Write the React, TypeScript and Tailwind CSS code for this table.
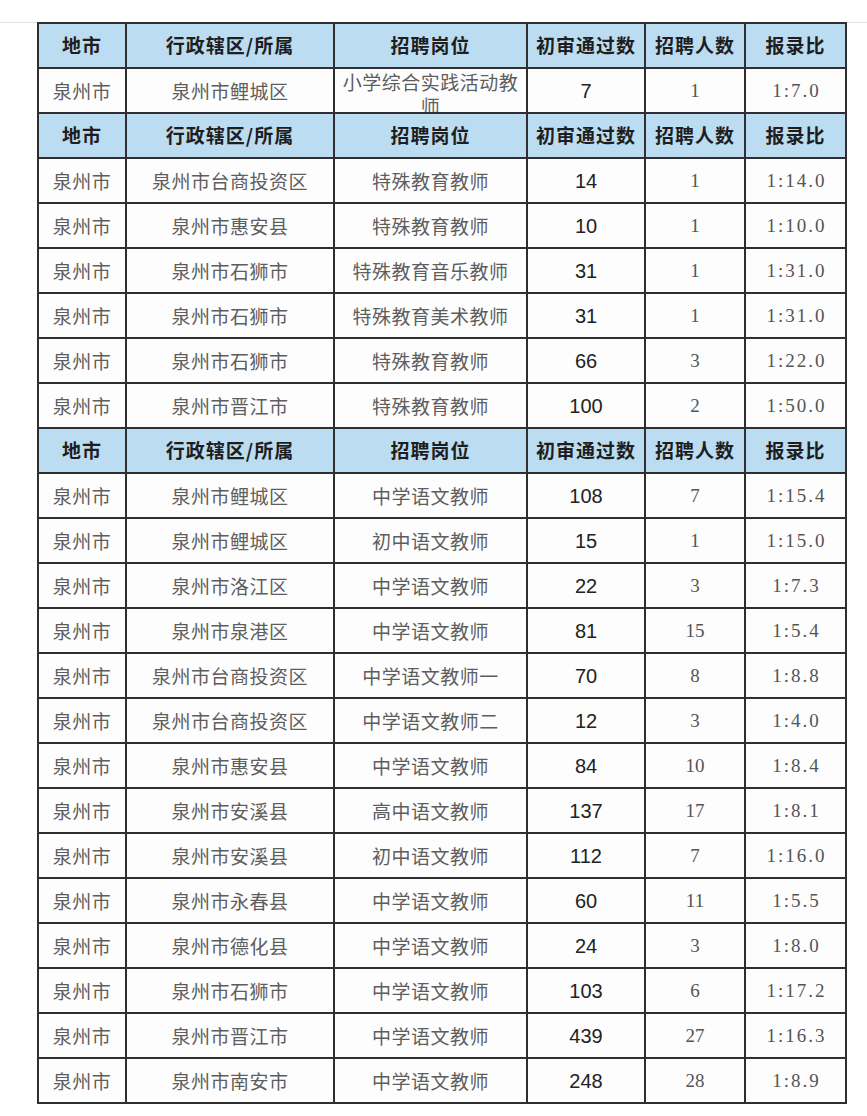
import React from "react";

type Row = [string, string, string, string, string, string];

const HEADER: Row = ["地市", "行政辖区/所属", "招聘岗位", "初审通过数", "招聘人数", "报录比"];

const sections: Row[][] = [
  [["泉州市", "泉州市鲤城区", "小学综合实践活动教师", "7", "1", "1:7.0"]],
  [
    ["泉州市", "泉州市台商投资区", "特殊教育教师", "14", "1", "1:14.0"],
    ["泉州市", "泉州市惠安县", "特殊教育教师", "10", "1", "1:10.0"],
    ["泉州市", "泉州市石狮市", "特殊教育音乐教师", "31", "1", "1:31.0"],
    ["泉州市", "泉州市石狮市", "特殊教育美术教师", "31", "1", "1:31.0"],
    ["泉州市", "泉州市石狮市", "特殊教育教师", "66", "3", "1:22.0"],
    ["泉州市", "泉州市晋江市", "特殊教育教师", "100", "2", "1:50.0"],
  ],
  [
    ["泉州市", "泉州市鲤城区", "中学语文教师", "108", "7", "1:15.4"],
    ["泉州市", "泉州市鲤城区", "初中语文教师", "15", "1", "1:15.0"],
    ["泉州市", "泉州市洛江区", "中学语文教师", "22", "3", "1:7.3"],
    ["泉州市", "泉州市泉港区", "中学语文教师", "81", "15", "1:5.4"],
    ["泉州市", "泉州市台商投资区", "中学语文教师一", "70", "8", "1:8.8"],
    ["泉州市", "泉州市台商投资区", "中学语文教师二", "12", "3", "1:4.0"],
    ["泉州市", "泉州市惠安县", "中学语文教师", "84", "10", "1:8.4"],
    ["泉州市", "泉州市安溪县", "高中语文教师", "137", "17", "1:8.1"],
    ["泉州市", "泉州市安溪县", "初中语文教师", "112", "7", "1:16.0"],
    ["泉州市", "泉州市永春县", "中学语文教师", "60", "11", "1:5.5"],
    ["泉州市", "泉州市德化县", "中学语文教师", "24", "3", "1:8.0"],
    ["泉州市", "泉州市石狮市", "中学语文教师", "103", "6", "1:17.2"],
    ["泉州市", "泉州市晋江市", "中学语文教师", "439", "27", "1:16.3"],
    ["泉州市", "泉州市南安市", "中学语文教师", "248", "28", "1:8.9"],
  ],
];

const cjk = "font-['Noto_Sans_CJK_SC',sans-serif]";
const cell =
  "h-[45px] border-r-2 border-b-2 border-[#2f2f2f] flex items-center justify-center overflow-hidden";

function HeaderRow() {
  return (
    <>
      {HEADER.map((h, i) => (
        <div
          key={i}
          className={`${cell} bg-[#bcdcf2] ${cjk} text-[19px] font-bold tracking-[1px] text-[#1e1e1e]`}
        >
          {h}
        </div>
      ))}
    </>
  );
}

function DataRow({ r }: { r: Row }) {
  const wraps = r[2].length > 9;
  return (
    <>
      <div className={`${cell} bg-[#fdfdfd] ${cjk} text-[19px] tracking-[0.5px] text-[#5e5e5e] pt-[2px]`}>
        {r[0]}
      </div>
      <div className={`${cell} bg-[#fdfdfd] ${cjk} text-[19px] tracking-[0.5px] text-[#5e5e5e] pt-[2px]`}>
        {r[1]}
      </div>
      {wraps ? (
        <div
          className={`h-[45px] border-r-2 border-b-2 border-[#2f2f2f] overflow-hidden bg-[#fdfdfd] ${cjk} text-[19px] leading-[24px] tracking-[0.5px] text-[#5e5e5e] text-center px-[4px] pt-[1px]`}
        >
          {r[2]}
        </div>
      ) : (
        <div className={`${cell} bg-[#fdfdfd] ${cjk} text-[19px] tracking-[0.5px] text-[#5e5e5e] pt-[2px]`}>
          {r[2]}
        </div>
      )}
      <div
        className={`${cell} bg-[#fdfdfd] font-['Liberation_Sans',Arial,sans-serif] text-[20px] text-[#222222]`}
      >
        {r[3]}
      </div>
      <div
        className={`${cell} bg-[#fdfdfd] font-['Liberation_Serif','Times_New_Roman',serif] text-[19px] text-[#555555] pt-[2px]`}
      >
        {r[4]}
      </div>
      <div
        className={`${cell} bg-[#fdfdfd] font-['Liberation_Serif','Times_New_Roman',serif] text-[19px] tracking-[2px] text-[#555555] pt-[2px] pl-[2px]`}
      >
        {r[5]}
      </div>
    </>
  );
}

export default function App() {
  return (
    <div className="min-h-screen bg-white pt-[22px]">
      <div className="border-t border-[#e2e2e2]">
        <div className="-mt-px ml-[37px] w-[810px] grid grid-cols-[88px_208px_193px_118px_100px_101px] border-l-2 border-t-2 border-[#2f2f2f]">
          {sections.map((rows, si) => (
            <React.Fragment key={si}>
              <HeaderRow />
              {rows.map((r, ri) => (
                <DataRow key={ri} r={r} />
              ))}
            </React.Fragment>
          ))}
        </div>
      </div>
    </div>
  );
}
